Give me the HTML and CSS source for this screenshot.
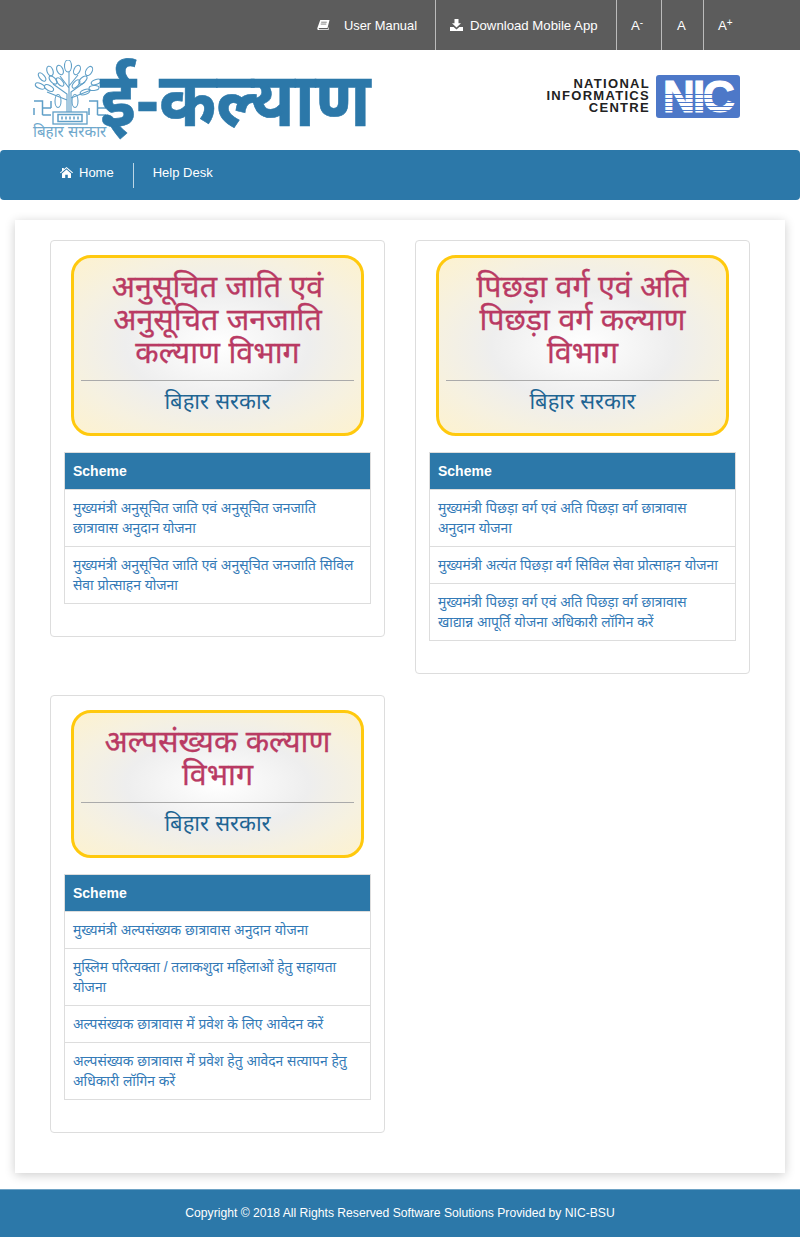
FILE: index.html
```html
<!DOCTYPE html>
<html lang="hi">
<head>
    <meta charset="UTF-8">
    <title>E-Kalyan</title>
    <link rel="stylesheet" href="styles.css">
</head>
<body>

<div class="top-bar">
    <a href="#" class="top-link manual">
        <svg class="top-icon" viewBox="0 0 14 12"><path d="M3.500 0.500h10l-2.200 8.600H2.600c-1 0-1.200 1.400 0 1.400h9.200l.9-3v3.400l-.8.600H2C.6 11.500 0 10.500 .4 9.200z" fill="#fff"/><path d="M4.500 3h6M4 5h6" stroke="#5c5c5c" stroke-width=".8"/></svg>
        User Manual
    </a>
    <a href="#" class="top-link download">
        <svg class="top-icon" viewBox="0 0 13 12"><path d="M4.500 0h4v4.200h2.500L6.500 8.500 2 4.200h2.500zM0 8h3.600l2.900 2.500L9.400 8H13v4H0z" fill="#fff"/></svg>
        Download Mobile App
    </a>
    <a href="#" class="top-link size">A<sup>-</sup></a>
    <a href="#" class="top-link size size-normal">A</a>
    <a href="#" class="top-link size">A<sup>+</sup></a>
</div>

<header class="brand">
    <div class="logo">
        <div class="emblem">
            <svg viewBox="0 0 74 66" class="emblem-art" fill="none" stroke="#5f9fc7" stroke-width="1.100">
                <path d="M36 52V12M34 52V34L20 24M38 52V32L52 22M34 40L14 32M38 38L58 30M36 28L27 16M36 26L45 15"/>
                <ellipse cx="35" cy="6" rx="3.500" ry="6"/>
                <ellipse cx="27" cy="10" rx="3" ry="5" transform="rotate(-25 27 10)"/>
                <ellipse cx="44" cy="10" rx="3" ry="5" transform="rotate(25 44 10)"/>
                <ellipse cx="17" cy="11" rx="3" ry="5" transform="rotate(-20 17 11)"/>
                <ellipse cx="56" cy="11" rx="3" ry="5" transform="rotate(30 56 11)"/>
                <ellipse cx="9" cy="17" rx="2.500" ry="5" transform="rotate(-40 9 17)"/>
                <ellipse cx="20" cy="20" rx="2.500" ry="5" transform="rotate(-45 20 20)"/>
                <ellipse cx="50" cy="20" rx="2.500" ry="5" transform="rotate(45 50 20)"/>
                <ellipse cx="63" cy="22" rx="2.500" ry="5" transform="rotate(70 63 22)"/>
                <ellipse cx="7" cy="26" rx="2.500" ry="5" transform="rotate(-65 7 26)"/>
                <ellipse cx="61" cy="28" rx="2.500" ry="5" transform="rotate(85 61 28)"/>
                <ellipse cx="16" cy="28" rx="2.500" ry="5" transform="rotate(-60 16 28)"/>
                <ellipse cx="52" cy="32" rx="2.500" ry="5" transform="rotate(70 52 32)"/>
                <ellipse cx="27" cy="22" rx="2.500" ry="5" transform="rotate(-40 27 22)"/>
                <ellipse cx="43" cy="24" rx="2.500" ry="5" transform="rotate(40 43 24)"/>
                <ellipse cx="25" cy="41" rx="3" ry="6.500"/>
                <ellipse cx="42" cy="41" rx="3" ry="6.500"/>
                <path d="M1 41h8.500v14M9.500 48H18M1 48v7M18 41v7M9.500 55H18" stroke-width="1.500"/>
                <path d="M56 41h8.500v14M64.500 48H73M56 48v7M73 41v7M64.500 55H73" stroke-width="1.500"/>
                <rect x="20" y="52" width="34" height="12" stroke-width="1.300"/>
                <rect x="25" y="54.500" width="24" height="7" stroke-width="1.500"/>
                <path d="M29 56.500v3M33 56.500v3M37 56.500v3M41 56.500v3M45 56.500v3" stroke-width="1.500"/>
            </svg>
            <span class="emblem-text">बिहार सरकार</span>
        </div>
        <span class="logo-title">ई-कल्याण</span>
    </div>
    <div class="nic-logo">
        <div class="nic-name">NATIONAL<br>INFORMATICS<br>CENTRE</div>
        <div class="nic-box"><span class="nic-letters">NIC</span></div>
    </div>
</header>

<nav class="main-nav">
    <a href="#" class="nav-link home">
        <svg class="home-icon" viewBox="0 0 13 11"><path d="M6.500 0L13 5.600l-.7.700-5.800-5-5.800 5L0 5.600l2-1.700V1h1.800v1.300zM2 6.500l4.500-3.900L11 6.500V11H7.800V7.800H5.200V11H2z" fill="#fff"/></svg>
        Home
    </a>
    <a href="#" class="nav-link">Help Desk</a>
</nav>

<main class="panel">
    <div class="dept-grid">
        <section class="dept-card">
            <div class="dept-banner">
                <h2>अनुसूचित जाति एवं अनुसूचित जनजाति कल्याण विभाग</h2>
                <h3>बिहार सरकार</h3>
            </div>
            <table class="scheme-table">
                <thead><tr><th>Scheme</th></tr></thead>
                <tbody>
                    <tr><td><a href="#">मुख्यमंत्री अनुसूचित जाति एवं अनुसूचित जनजाति छात्रावास अनुदान योजना</a></td></tr>
                    <tr><td><a href="#">मुख्यमंत्री अनुसूचित जाति एवं अनुसूचित जनजाति सिविल सेवा प्रोत्साहन योजना</a></td></tr>
                </tbody>
            </table>
        </section>

        <section class="dept-card">
            <div class="dept-banner">
                <h2>पिछड़ा वर्ग एवं अति पिछड़ा वर्ग कल्याण विभाग</h2>
                <h3>बिहार सरकार</h3>
            </div>
            <table class="scheme-table">
                <thead><tr><th>Scheme</th></tr></thead>
                <tbody>
                    <tr><td><a href="#">मुख्यमंत्री पिछड़ा वर्ग एवं अति पिछड़ा वर्ग छात्रावास अनुदान योजना</a></td></tr>
                    <tr><td><a href="#">मुख्यमंत्री अत्यंत पिछड़ा वर्ग सिविल सेवा प्रोत्साहन योजना</a></td></tr>
                    <tr><td><a href="#">मुख्यमंत्री पिछड़ा वर्ग एवं अति पिछड़ा वर्ग छात्रावास खाद्यान्न आपूर्ति योजना अधिकारी लॉगिन करें</a></td></tr>
                </tbody>
            </table>
        </section>

        <section class="dept-card">
            <div class="dept-banner">
                <h2>अल्पसंख्यक कल्याण विभाग</h2>
                <h3>बिहार सरकार</h3>
            </div>
            <table class="scheme-table">
                <thead><tr><th>Scheme</th></tr></thead>
                <tbody>
                    <tr><td><a href="#">मुख्यमंत्री अल्पसंख्यक छात्रावास अनुदान योजना</a></td></tr>
                    <tr><td><a href="#">मुस्लिम परित्यक्ता / तलाकशुदा महिलाओं हेतु सहायता योजना</a></td></tr>
                    <tr><td><a href="#">अल्पसंख्यक छात्रावास में प्रवेश के लिए आवेदन करें</a></td></tr>
                    <tr><td><a href="#">अल्पसंख्यक छात्रावास में प्रवेश हेतु आवेदन सत्यापन हेतु अधिकारी लॉगिन करें</a></td></tr>
                </tbody>
            </table>
        </section>
    </div>
</main>

<footer class="site-footer">
    Copyright &copy; 2018 All Rights Reserved Software Solutions Provided by NIC-BSU
</footer>

</body>
</html>
```

FILE: styles.css
```css
body {
    font-family: "Liberation Sans", Arial, "Noto Sans", sans-serif;
    font-size: 14px;
    background-color: #fff;
    margin: 0;
    padding: 0;
}
a {
    text-decoration: none;
}
.top-bar {
    height: 50px;
    background-color: #5c5c5c;
    display: flex;
    justify-content: flex-end;
    padding-right: 52px;
}
.top-link {
    color: #fff;
    font-size: 13.2px;
    line-height: 48px;
    padding-top: 2px;
    border-left: 1px solid #bbb;
    display: flex;
    align-items: center;
    box-sizing: border-box;
}
.manual {
    border-left: none;
    padding-right: 18px;
    font-size: 12.9px;
}
.download {
    width: 181px;
    padding-left: 14px;
}
.size {
    width: 45px;
    padding-left: 14px;
}
.size-normal {
    width: 42px;
    padding-left: 15px;
}
.size sup {
    font-size: 10px;
    line-height: 0;
    margin-top: -6px;
}
.top-icon {
    width: 13px;
    height: 12px;
    margin: -2px 7px 0 0;
}
.manual .top-icon {
    margin-right: 14px;
}
.brand {
    height: 100px;
    display: flex;
    justify-content: space-between;
    align-items: flex-start;
    padding: 0 60px 0 33px;
}
.logo {
    display: flex;
    align-items: flex-start;
}
.emblem {
    width: 74px;
    padding-top: 10px;
}
.emblem-art {
    display: block;
    width: 74px;
    height: 66px;
}
.emblem-text {
    display: block;
    font-size: 15.200px;
    line-height: 12px;
    white-space: nowrap;
    color: #6fa8cc;
}
.logo-title {
    margin-left: -7px;
    font-size: 75px;
    font-weight: bold;
    line-height: 101px;
    color: #2c78a9;
    -webkit-text-stroke: 0.6px #2c78a9;
    transform: scaleX(0.92);
    transform-origin: left center;
}
.nic-logo {
    display: flex;
    align-items: center;
    padding-top: 25px;
    gap: 7px;
}
.nic-name {
    font-size: 13px;
    font-weight: bold;
    line-height: 12px;
    letter-spacing: 1.300px;
    margin: -1px -1px 0 0;
    text-align: right;
    color: #222;
}
.nic-box {
    width: 84px;
    height: 43px;
    background-color: #4d78c8;
    border-radius: 3px;
    position: relative;
    text-align: center;
}
.nic-letters {
    display: block;
    font-size: 44px;
    font-weight: bold;
    line-height: 43px;
    color: #fff;
    letter-spacing: -2px;
    -webkit-text-stroke: 1.200px #fff;
}
.nic-box::after {
    content: "";
    position: absolute;
    left: 0;
    right: 0;
    top: 19px;
    bottom: 0;
    background: repeating-linear-gradient(#4d78c8 0, #4d78c8 1px, transparent 1px, transparent 4px);
}
.main-nav {
    height: 50px;
    background-color: #2c78a9;
    border-radius: 4px;
    display: flex;
    align-items: center;
    padding-left: 60px;
}
.nav-link {
    color: #fff;
    font-size: 13px;
    line-height: 20px;
    height: 25px;
    display: flex;
    align-items: flex-start;
    padding-left: 19px;
}
.home {
    padding: 0 19px 0 0;
    border-right: 1px solid #bcd6e6;
}
.home-icon {
    width: 13px;
    height: 11px;
    margin: 4px 6px 0 0;
}
.panel {
    margin: 20px 15px 16px;
    padding: 20px 35px 40px;
    box-shadow: 0 2px 10px rgba(0,0,0,0.2);
    background: #fff;
}
.dept-grid {
    display: grid;
    grid-template-columns: 335px 335px;
    column-gap: 30px;
    row-gap: 21px;
    align-items: start;
}
.dept-card {
    border: 1px solid #ddd;
    border-radius: 4px;
    padding: 14px 13px 32px;
}
.dept-banner {
    margin: 0 7px 16px;
    border: 3px solid #ffc90e;
    border-radius: 20px;
    padding: 12px 7px 18px;
    text-align: center;
    background: radial-gradient(ellipse at center, #fff 0%, #eee 45%, #f6f1e0 72%, #fdf2cf 100%);
}
.dept-banner h2 {
    margin: 0;
    padding-bottom: 11px;
    border-bottom: 1px solid #aaa;
    font-size: 30.400px;
    font-weight: normal;
    line-height: 33px;
    color: #b93a63;
    -webkit-text-stroke: 0.3px #b93a63;
}
.dept-banner h3 {
    margin: 0;
    padding-top: 8px;
    font-size: 22px;
    font-weight: normal;
    line-height: 26px;
    color: #1f6593;
}
.scheme-table {
    width: 100%;
    border-collapse: collapse;
}
.scheme-table th {
    background-color: #2c78a9;
    color: #fff;
    font-size: 14px;
    text-align: left;
    padding: 8px;
    line-height: 20px;
    border: 1px solid #ddd;
}
.scheme-table td {
    padding: 8px 12px 8px 8px;
    font-size: 13.850px;
    line-height: 20px;
    border: 1px solid #ddd;
}
.scheme-table a {
    color: #337ab7;
}
.site-footer {
    height: 47px;
    line-height: 47px;
    background-color: #2c78a9;
    border-top: 1px solid #6fa3c5;
    border-bottom: 1px solid #6fa3c5;
    color: #fff;
    font-size: 12.150px;
    text-align: center;
}
```
